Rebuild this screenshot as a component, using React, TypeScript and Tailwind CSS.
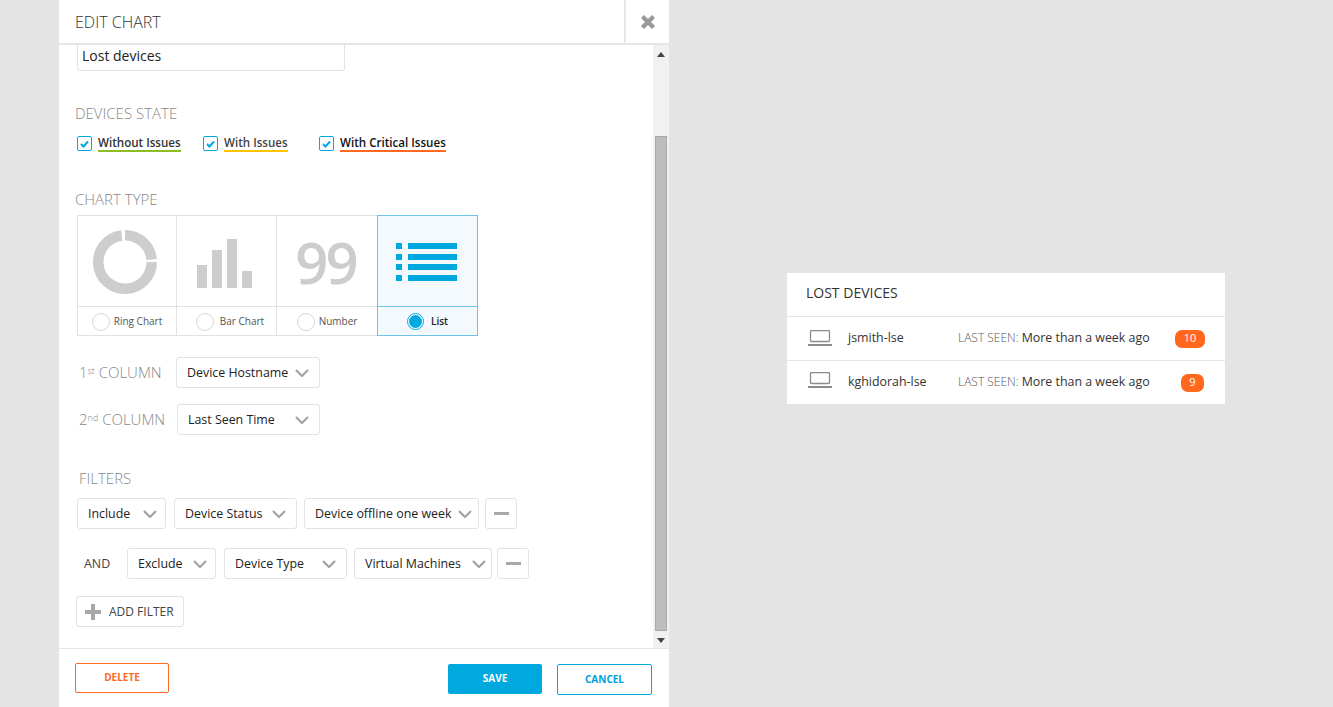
import React from "react";

const Chevron = () => (
  <svg width="14" height="8" viewBox="0 0 14 8" className="shrink-0">
    <path d="M1 1 L7 7 L13 1" fill="none" stroke="#a3a3a3" strokeWidth="2.2" />
  </svg>
);

const Select = ({ label, w, cls = "", pr = "pr-[10px]" }: { label: string; w: string; cls?: string; pr?: string }) => (
  <div className={`${w} ${cls} ${pr} h-[31px] shrink-0 flex items-center justify-between pl-[10px] border border-[#e2e2e2] rounded-[3px] bg-white text-[12.4px] text-[#222]`}>
    <span className="whitespace-nowrap pt-[1px]">{label}</span>
    <Chevron />
  </div>
);

const Minus = ({ cls = "" }: { cls?: string }) => (
  <div className={`${cls} w-[32px] h-[31px] shrink-0 flex items-center justify-center border border-[#e2e2e2] rounded-[3px] bg-white`}>
    <div className="w-[15px] h-[3px] bg-[#a8a8a8]" />
  </div>
);

const Check = ({ label, color, w, text }: { label: string; color: string; w: string; text: string }) => (
  <div className={`flex items-start ${w}`}>
    <div className="w-[15px] h-[15px] border border-[#00a8e0] rounded-[2px] flex items-center justify-center mr-[6px] mt-[-1px]">
      <svg width="9" height="8" viewBox="0 0 9 8">
        <path d="M1 4 L3.5 6.5 L8 1.5" fill="none" stroke="#00a8e0" strokeWidth="2" />
      </svg>
    </div>
    <span className={`text-[11.6px] font-semibold leading-[11px] pb-[2px] border-b-2 whitespace-nowrap ${color} ${text}`}>{label}</span>
  </div>
);

const Radio = ({ on }: { on?: boolean }) =>
  on ? (
    <span className="w-[17px] h-[17px] rounded-full border border-[#00a8e0] flex items-center justify-center bg-white shrink-0">
      <span className="w-[13px] h-[13px] rounded-full bg-[#00a8e0]" />
    </span>
  ) : (
    <span className="w-[18px] h-[18px] rounded-full border border-[#d6d6d6] bg-white shrink-0" />
  );

const ChartCell = ({ w, icon, label, gap, active, last }: { w: string; icon: React.ReactNode; label: string; gap: string; active?: boolean; last?: boolean }) => (
  <div className={`${w} flex flex-col shrink-0 ${active ? "border border-[#6cc5e6] bg-[#f3f9fd] -mt-[1px] -mb-[1px] h-[121px]" : last ? "" : "border-r border-[#e2e2e2]"}`}>
    <div className={`h-[91px] flex items-center justify-center border-b ${active ? "border-[#6cc5e6]" : "border-[#e2e2e2]"}`}>{icon}</div>
    <div className={`flex-1 flex items-center justify-center pt-[1px] ${gap}`}>
      <Radio on={active} />
      <span className={`text-[10px] ${active ? "font-semibold text-[#222]" : "text-[#555]"}`}>{label}</span>
    </div>
  </div>
);

const Laptop = ({ cls }: { cls: string }) => (
  <svg width="24" height="16" viewBox="0 0 24 16" className={`shrink-0 ${cls}`}>
    <rect x="2.5" y="0.5" width="19" height="11" rx="1" fill="none" stroke="#8c8c8c" strokeWidth="1.3" />
    <rect x="0" y="14" width="24" height="2" fill="#8c8c8c" />
  </svg>
);

const Row = ({ name, badge, badgeW, border, h, pr, lap }: { name: string; badge: string; badgeW: string; border?: boolean; h: string; pr: string; lap: string }) => (
  <div className={`${h} ${pr} flex items-center pl-[21px] ${border ? "border-b border-[#e6e6e6]" : ""}`}>
    <Laptop cls={lap} />
    <span className="ml-[16px] w-[110px] text-[12.4px] text-[#333] mb-[1px] whitespace-nowrap">{name}</span>
    <span className="text-[12px] font-light text-[#555] whitespace-nowrap mb-[1px]">LAST SEEN: </span>
    <span className="ml-[3px] text-[12.4px] text-[#333] whitespace-nowrap mb-[1px]">More than a week ago</span>
    <span className="flex-1 flex justify-end">
      <span className={`${badgeW} h-[18px] rounded-[7px] bg-[#ff681d] text-white text-[11px] flex items-center justify-center`}>{badge}</span>
    </span>
  </div>
);

export default function App() {
  return (
    <div className="w-[1333px] h-[707px] overflow-hidden bg-[#e4e4e4] flex font-['Open_Sans',sans-serif]">
      <div className="ml-[59px] w-[610px] h-[707px] bg-white flex flex-col shrink-0">
        <div className="h-[45px] shrink-0 flex border-b-2 border-[#e6e6e6]">
          <div className="flex-1 pl-[16px] flex items-center text-[16px] font-light text-[#333]">EDIT CHART</div>
          <div className="w-[45px] border-l-2 border-[#e6e6e6] flex items-center justify-center">
            <svg width="16" height="16" viewBox="0 0 16 16">
              <path d="M2.5 2.5 L13.5 13.5 M13.5 2.5 L2.5 13.5" stroke="#999" strokeWidth="4.4" />
            </svg>
          </div>
        </div>

        <div className="h-[603px] shrink-0 flex overflow-hidden">
          <div className="flex-1 overflow-hidden flex flex-col">
            <div className="ml-[18px] w-[268px] h-[26px] shrink-0 border border-t-0 border-[#e2e2e2] rounded-b-[3px] pl-[4px] pb-[4px] flex items-center text-[14px] text-[#222]">Lost devices</div>

            <div className="ml-[16px] mt-[33px] text-[15px] leading-[19px] font-light text-[#888]">DEVICES STATE</div>
            <div className="ml-[18px] mt-[14px] flex h-[17px]">
              <Check label="Without Issues" color="border-[#8cbe23]" w="w-[126px]" text="text-[#333]" />
              <Check label="With Issues" color="border-[#ffc400]" w="w-[116px]" text="text-[#444]" />
              <Check label="With Critical Issues" color="border-[#ff681d]" w="w-[130px]" text="text-[#111]" />
            </div>

            <div className="ml-[16px] mt-[36px] text-[15px] leading-[19px] font-light text-[#888]">CHART TYPE</div>
            <div className="ml-[18px] mt-[6px] w-[401px] h-[121px] flex border border-[#e2e2e2] border-r-0">
              <ChartCell
                w="w-[99px]"
                label="Ring Chart"
                gap="gap-[4px]"
                icon={
                  <svg width="64" height="64" viewBox="0 0 64 64" className="mr-[4px] mt-[2px]">
                    <path d="M28.7 5.45 A26.75 26.75 0 1 0 58.75 32" fill="none" stroke="#cdcdcd" strokeWidth="10.5" />
                    <path d="M32 5.25 A26.75 26.75 0 0 1 58.63 29.5" fill="none" stroke="#cdcdcd" strokeWidth="10.5" />
                  </svg>
                }
              />
              <ChartCell
                w="w-[100px]"
                label="Bar Chart"
                gap="gap-[6px] pl-[7px]"
                icon={
                  <div className="flex items-end gap-[5px] h-[49px] mr-[5px] mt-[4px]">
                    <div className="w-[10px] h-[23px] bg-[#cdcdcd]" />
                    <div className="w-[10px] h-[38px] bg-[#cdcdcd]" />
                    <div className="w-[10px] h-[49px] bg-[#cdcdcd]" />
                    <div className="w-[10px] h-[17px] bg-[#cdcdcd]" />
                  </div>
                }
              />
              <ChartCell
                w="w-[100px]"
                label="Number"
                gap="gap-[4px]"
                last
                icon={<span className="text-[58px] leading-none font-semibold text-[#cdcdcd] tracking-[-3px] mr-[3px] mt-[2px]">99</span>}
              />
              <ChartCell
                w="w-[101px]"
                label="List"
                gap="gap-[7px]"
                active
                icon={
                  <div className="flex flex-col gap-[4.6px] mr-[2px] mt-[2px]">
                    {[0, 1, 2, 3].map((i) => (
                      <div key={i} className="flex gap-[6px]">
                        <div className="w-[6px] h-[6px] bg-[#00a8e0]" />
                        <div className="w-[49px] h-[6px] bg-[#00a8e0]" />
                      </div>
                    ))}
                  </div>
                }
              />
            </div>

            <div className="ml-[20px] mt-[21px] flex items-center h-[31px]">
              <span className="w-[97px] text-[15px] font-light text-[#888] whitespace-nowrap">1<sup className="text-[9px]">st</sup> COLUMN</span>
              <Select label="Device Hostname" w="w-[144px]" />
            </div>
            <div className="ml-[20px] mt-[16px] flex items-center h-[31px]">
              <span className="w-[98px] text-[15px] font-light text-[#888] whitespace-nowrap">2<sup className="text-[9px]">nd</sup> COLUMN</span>
              <Select label="Last Seen Time" w="w-[143px]" />
            </div>

            <div className="ml-[20px] mt-[34px] text-[15px] leading-[19px] font-light text-[#888]">FILTERS</div>
            <div className="ml-[18px] mt-[10px] flex items-center">
              <Select label="Include" w="w-[89px]" pr="pr-[8px]" />
              <Select label="Device Status" w="w-[123px]" cls="ml-[8px]" />
              <Select label="Device offline one week" w="w-[175px]" cls="ml-[7px]" pr="pr-[6px]" />
              <Minus cls="ml-[6px]" />
            </div>
            <div className="ml-[18px] mt-[19px] flex items-center">
              <span className="w-[50px] pl-[7px] pt-[1px] text-[12.4px] text-[#444]">AND</span>
              <Select label="Exclude" w="w-[89px]" pr="pr-[8px]" />
              <Select label="Device Type" w="w-[123px]" cls="ml-[8px]" />
              <Select label="Virtual Machines" w="w-[138px]" cls="ml-[7px]" pr="pr-[5px]" />
              <Minus cls="ml-[5px]" />
            </div>
            <div className="ml-[17px] mt-[17px] w-[108px] h-[31px] flex items-center border border-[#e2e2e2] rounded-[3px] pl-[8px]">
              <svg width="16" height="16" viewBox="0 0 16 16">
                <path d="M8 0 V16 M0 8 H16" stroke="#a8a8a8" strokeWidth="4" />
              </svg>
              <span className="ml-[8px] text-[12px] text-[#444] whitespace-nowrap">ADD FILTER</span>
            </div>
          </div>

          <div className="w-[16px] shrink-0 bg-[#f1f1f1] flex flex-col items-center">
            <div className="h-[91px] w-full flex justify-center pt-[7px]">
              <svg width="8" height="5" viewBox="0 0 8 5" className="block"><path d="M4 0 L8 5 H0 Z" fill="#444" /></svg>
            </div>
            <div className="w-[12px] h-[495px] bg-[#bdbdbd] border border-[#a9a9a9]" />
            <div className="h-[17px] w-full flex items-center justify-center pt-[2px]">
              <svg width="8" height="5" viewBox="0 0 8 5"><path d="M0 0 H8 L4 5 Z" fill="#444" /></svg>
            </div>
          </div>
        </div>

        <div className="flex-1 border-t border-[#e6e6e6] flex pl-[16px] pr-[17px] pt-[14px]">
          <div className="w-[94px] h-[30px] border border-[#ff681d] rounded-[2px] flex items-center justify-center pb-[1px] text-[10px] font-bold text-[#ff681d]">DELETE</div>
          <div className="ml-auto mt-[1px] w-[94px] h-[30px] bg-[#00a8e0] rounded-[2px] flex items-center justify-center pb-[2px] text-[10px] font-bold text-white">SAVE</div>
          <div className="ml-[15px] mt-[1px] w-[95px] h-[31px] border border-[#00a8e0] rounded-[2px] flex items-center justify-center pb-[1px] text-[10px] font-bold text-[#00a0d8]">CANCEL</div>
        </div>
      </div>

      <div className="ml-[118px] mt-[273px] w-[438px] h-[131px] bg-white flex flex-col shrink-0">
        <div className="h-[44px] flex items-center pl-[19px] pb-[4px] text-[14px] text-[#333] border-b border-[#e6e6e6] shrink-0">LOST DEVICES</div>
        <Row name="jsmith-lse" badge="10" badgeW="w-[30px]" border h="h-[44px]" pr="pr-[20px]" lap="mb-[1px]" />
        <Row name="kghidorah-lse" badge="9" badgeW="w-[23px]" h="h-[43px]" pr="pr-[21px]" lap="mb-[5px]" />
      </div>
    </div>
  );
}
